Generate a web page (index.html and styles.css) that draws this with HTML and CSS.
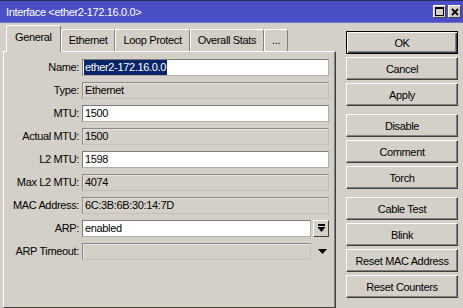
FILE: index.html
```html
<!DOCTYPE html>
<html lang="en">
<head>
  <meta charset="UTF-8">
  <title>Interface &lt;ether2-172.16.0.0&gt;</title>
  <link rel="stylesheet" href="styles.css">
</head>
<body>
  <div class="window">
    <div class="titlebar">
      <span class="title">Interface &lt;ether2-172.16.0.0&gt;</span>
      <div class="title-buttons">
        <span class="title-btn">
          <svg width="9" height="9" viewBox="0 0 9 9"><rect x="0.5" y="0.5" width="8" height="8" fill="none" stroke="#000"/><line x1="0" y1="1.5" x2="9" y2="1.5" stroke="#000"/></svg>
        </span>
        <span class="title-btn">
          <svg width="8" height="8" viewBox="0 0 8 8"><path d="M1 1 L7 7 M7 1 L1 7" stroke="#000" stroke-width="1.8"/></svg>
        </span>
      </div>
    </div>

    <div class="content">
      <div class="tabs-area">
        <div class="tabs">
          <div class="tab active">General</div>
          <div class="tab">Ethernet</div>
          <div class="tab">Loop Protect</div>
          <div class="tab">Overall Stats</div>
          <div class="tab">...</div>
        </div>

        <div class="panel">
          <div class="form">
            <label>Name:</label>
            <div class="field edit"><span class="selected">ether2-172.16.0.0</span></div>

            <label>Type:</label>
            <div class="field">Ethernet</div>

            <label>MTU:</label>
            <div class="field edit">1500</div>

            <label>Actual MTU:</label>
            <div class="field">1500</div>

            <label>L2 MTU:</label>
            <div class="field edit">1598</div>

            <label>Max L2 MTU:</label>
            <div class="field">4074</div>

            <label>MAC Address:</label>
            <div class="field">6C:3B:6B:30:14:7D</div>

            <label>ARP:</label>
            <div class="field-row">
              <div class="field edit">enabled</div>
              <span class="drop-btn">
                <svg width="9" height="9" viewBox="0 0 9 9"><rect x="1" y="0" width="7" height="2" fill="#000"/><path d="M0.5 3 H8.5 L4.5 8 Z" fill="#000"/></svg>
              </span>
            </div>

            <label>ARP Timeout:</label>
            <div class="field-row">
              <div class="field"></div>
              <span class="drop-arrow">
                <svg width="9" height="6" viewBox="0 0 9 6"><path d="M0 0 H9 L4.5 5 Z" fill="#000"/></svg>
              </span>
            </div>
          </div>
        </div>
      </div>

      <div class="buttons">
        <div class="group">
          <button class="btn default">OK</button>
          <button class="btn">Cancel</button>
          <button class="btn">Apply</button>
        </div>
        <div class="group">
          <button class="btn">Disable</button>
          <button class="btn">Comment</button>
          <button class="btn">Torch</button>
        </div>
        <div class="group">
          <button class="btn">Cable Test</button>
          <button class="btn">Blink</button>
          <button class="btn">Reset MAC Address</button>
          <button class="btn">Reset Counters</button>
        </div>
      </div>
    </div>
  </div>
</body>
</html>
```

FILE: styles.css
```css
body {
  margin: 0;
  width: 463px;
  height: 308px;
  overflow: hidden;
  background: #d4d0c8;
  font-family: 'Liberation Sans', Arial, sans-serif;
  font-size: 11px;
  letter-spacing: -0.35px;
  color: #000;
}

.window {
  height: 100%;
  display: flex;
  flex-direction: column;
}

.titlebar {
  height: 21px;
  border-top: 1px solid #2a2a5a;
  border-bottom: 1px solid #6f72cf;
  background: #4b4fc6;
  display: flex;
  align-items: center;
  justify-content: space-between;
  padding: 0 2px 0 6px;
}

.title {
  color: #fff;
  font-size: 11px;
}

.title-buttons {
  display: flex;
  gap: 2px;
}

.title-btn {
  width: 11px;
  height: 11px;
  background: #d4d0c8;
  border: 1px solid;
  border-color: #fff #404040 #404040 #fff;
  display: flex;
  align-items: center;
  justify-content: center;
}

.content {
  flex: 1;
  display: flex;
  padding: 3px 5px 0 3px;
}

/* Tabs + panel */
.tabs-area {
  width: 333px;
  display: flex;
  flex-direction: column;
}

.tabs {
  display: flex;
  align-items: flex-end;
  height: 25px;
  padding-left: 3px;
  position: relative;
  z-index: 1;
}

.tab {
  height: 21px;
  line-height: 21px;
  padding: 0 7px;
  border: 1px solid;
  border-color: #fff #808080 transparent #fff;
  border-bottom: none;
  border-radius: 2px 2px 0 0;
  background: #d4d0c8;
}

.tab.active {
  height: 26px;
  line-height: 22px;
  margin-bottom: -1px;
  padding: 0 8px;
}

.panel {
  flex: 1;
  border: 1px solid;
  border-color: #fff #404040 #404040 #fff;
  box-shadow: inset -1px 0 #808080;
  padding: 7px 7px 0 0;
}

.form {
  display: grid;
  grid-template-columns: 75px 1fr;
  column-gap: 3px;
  row-gap: 6px;
}

.form label {
  text-align: right;
  height: 17px;
  line-height: 17px;
}

.field {
  height: 15px;
  line-height: 15px;
  padding: 0 2px;
  border: 1px solid;
  border-color: #8a8a8a #c4c0b8 #c4c0b8 #8a8a8a;
  box-shadow: inset 1px 1px #e6e3de;
  white-space: nowrap;
  overflow: hidden;
}

.field.edit {
  background: #fff;
  border-color: #7a7a7a #b0ada6 #b0ada6 #7a7a7a;
  box-shadow: none;
}

.selected {
  background: #0a246a;
  color: #fff;
  display: inline-block;
  height: 15px;
  padding: 0 1px;
  margin-left: -1px;
}

.field-row {
  display: flex;
  align-items: center;
}

.field-row .field {
  width: 223px;
}

.drop-btn {
  margin-left: 2px;
  width: 14px;
  height: 15px;
  border: 1px solid;
  border-color: #fff #404040 #404040 #fff;
  display: flex;
  align-items: center;
  justify-content: center;
}

.drop-arrow {
  margin-left: 7px;
  display: flex;
  align-items: center;
}

/* Right button column */
.buttons {
  margin-left: 10px;
  padding-top: 5px;
  width: 112px;
  display: flex;
  flex-direction: column;
  gap: 8px;
}

.group {
  display: flex;
  flex-direction: column;
  gap: 3px;
}

.btn {
  height: 23px;
  width: 112px;
  padding: 0;
  background: #d4d0c8;
  font-family: 'Liberation Sans', Arial, sans-serif;
  font-size: 11px;
  letter-spacing: -0.35px;
  color: #000;
  border: 1px solid;
  border-color: #fff #404040 #404040 #fff;
  box-shadow: inset -1px -1px #808080;
}

.btn.default {
  border-color: #000;
  box-shadow: inset 1px 1px #fff, inset -1px -1px #404040, inset -2px -2px #808080;
}
```
